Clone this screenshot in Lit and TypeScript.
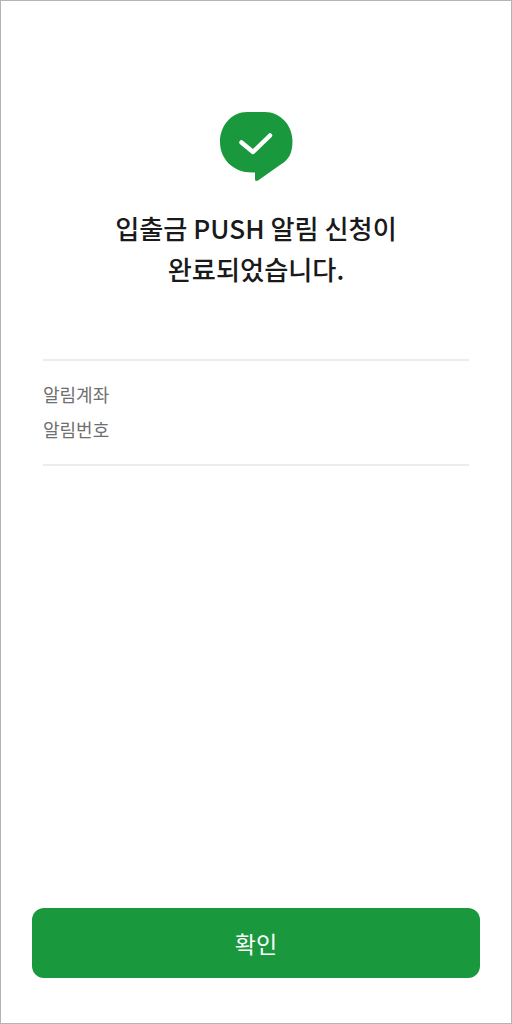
import { LitElement, html, css } from "lit";
import { customElement } from "lit/decorators.js";

@customElement("app-root")
export class AppRoot extends LitElement {
  static styles = css`
    :host { display: block; }
    .page {
      box-sizing: border-box; width: 512px; height: 1024px; background: #fff;
      border: 1px solid #b4b4b4; display: flex; flex-direction: column; align-items: center;
      font-family: "Noto Sans CJK KR", "Noto Sans", sans-serif; color: #1a1a1a;
      padding: 110px 31px 45px;
    }
    .icon { display: block; width: 74px; height: 72px; }
    h1 { margin: 25px 0 0; font-size: 26.2px; line-height: 41px; font-weight: 500; text-align: center; }
    .info {
      align-self: stretch; margin: 69px 11px 0; padding: 19px 0 21px;
      border-top: 2px solid #ececec; border-bottom: 2px solid #ececec;
      display: flex; flex-direction: column; gap: 7px;
      font-size: 18px; line-height: 28px; color: #6f6f6f;
    }
    .spacer { flex: 1; }
    button {
      align-self: stretch; height: 70px; border: 0; border-radius: 12px; background: #1a983e;
      color: #fff; font: inherit; font-size: 23px;
    }
  `;
  render() {
    return html`<div class="page">
      <svg class="icon" viewBox="0 0 74 72" aria-hidden="true">
        <path fill="#1a983e" d="M28 1h18C61 1 73.500 14 73.500 30 73.500 42 70 49 61 54L39 69.500C37 70.500 36 70 36 68V61.500H33C14 61.500 1 48 1 31 1 14 13 1 28 1z"/>
        <path fill="none" stroke="#fff" stroke-width="4.5" stroke-linecap="round" stroke-linejoin="round" d="M22.500 31.500L34 41 51 24.500"/>
      </svg>
      <h1>입출금 PUSH 알림 신청이<br />완료되었습니다.</h1>
      <div class="info"><div>알림계좌</div><div>알림번호</div></div>
      <div class="spacer"></div>
      <button>확인</button>
    </div>`;
  }
}
